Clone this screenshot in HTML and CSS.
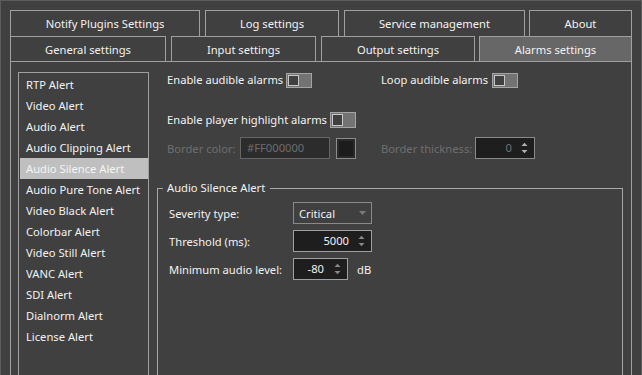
FILE: index.html
```html
<!DOCTYPE html>
<html>
<head>
<meta charset="utf-8">
<link rel="stylesheet" href="styles.css">
</head>
<body>
<div class="window">
  <div class="tabrow row1">
    <div class="tab t-notify">Notify Plugins Settings</div>
    <div class="tab t-log">Log settings</div>
    <div class="tab t-service">Service management</div>
    <div class="tab t-about">About</div>
  </div>
  <div class="tabrow row2">
    <div class="tab t-general">General settings</div>
    <div class="tab t-input">Input settings</div>
    <div class="tab t-output">Output settings</div>
    <div class="tab t-alarms selected">Alarms settings</div>
  </div>
  <div class="pane">
    <ul class="alert-list">
      <li>RTP Alert</li>
      <li>Video Alert</li>
      <li>Audio Alert</li>
      <li>Audio Clipping Alert</li>
      <li class="current">Audio Silence Alert</li>
      <li>Audio Pure Tone Alert</li>
      <li>Video Black Alert</li>
      <li>Colorbar Alert</li>
      <li>Video Still Alert</li>
      <li>VANC Alert</li>
      <li>SDI Alert</li>
      <li>Dialnorm Alert</li>
      <li>License Alert</li>
    </ul>
    <div class="main">
      <div class="grid2 row-a">
        <div class="check"><span class="check-text w-audible">Enable audible alarms</span><span class="toggle"><span class="knob"></span></span></div>
        <div class="check"><span class="check-text w-loop">Loop audible alarms</span><span class="toggle"><span class="knob"></span></span></div>
      </div>
      <div class="row-b">
        <div class="check"><span class="check-text w-highlight">Enable player highlight alarms</span><span class="toggle tall"><span class="knob"></span></span></div>
      </div>
      <div class="grid2 row-c">
        <div class="field">
          <span class="dis-label w-bcolor">Border color:</span>
          <span class="textbox">#FF000000</span>
          <span class="swatch"><span class="swatch-in"></span></span>
        </div>
        <div class="field">
          <span class="dis-label w-bthick">Border thickness:</span>
          <span class="spin disabled w-thick"><span class="spin-val">0</span><svg class="arrows" width="7" height="12" viewBox="0 0 7 12"><polygon points="0.5,4 3.5,0.8 6.5,4"/><polygon points="0.5,8 3.5,11.2 6.5,8"/></svg></span>
        </div>
      </div>
      <fieldset class="group">
        <legend>Audio Silence Alert</legend>
        <div class="grow">
          <span class="glabel">Severity type:</span>
          <span class="combo">Critical<svg class="drop" width="7" height="4" viewBox="0 0 7 4"><polygon points="0,0 7,0 3.5,4"/></svg></span>
        </div>
        <div class="grow">
          <span class="glabel">Threshold (ms):</span>
          <span class="spin w-threshold"><span class="spin-val">5000</span><svg class="arrows" width="7" height="12" viewBox="0 0 7 12"><polygon points="0.5,4 3.5,0.8 6.5,4"/><polygon points="0.5,8 3.5,11.2 6.5,8"/></svg></span>
        </div>
        <div class="grow">
          <span class="glabel">Minimum audio level:</span>
          <span class="spin w-level"><span class="spin-val">-80</span><svg class="arrows" width="7" height="12" viewBox="0 0 7 12"><polygon points="0.5,4 3.5,0.8 6.5,4"/><polygon points="0.5,8 3.5,11.2 6.5,8"/></svg></span>
          <span class="unit">dB</span>
        </div>
      </fieldset>
    </div>
  </div>
</div>
</body>
</html>
```
FILE: styles.css
```css
* { box-sizing: border-box; }
html, body { margin: 0; padding: 0; background: #404040; }
body {
  font-family: "Noto Sans", "Open Sans", sans-serif;
  font-size: 11.2px;
  color: #f2f2f2;
}
.window {
  width: 642px;
  height: 375px;
  overflow: hidden;
  border: 1px solid #5c5c5c;
  border-bottom: none;
  padding: 9px 9px 0 9px;
}
.tabrow { display: flex; }
.tab {
  border: 1px solid #a0a0a0;
  border-bottom: none;
  text-align: center;
  white-space: nowrap;
  background: #404040;
}
.row1 .tab { height: 26px; line-height: 26px; }
.row2 .tab { height: 25px; line-height: 25px; }
.t-notify { width: 190px; }
.t-log { width: 134px; margin-left: 5px; }
.t-service { width: 181px; margin-left: 5px; }
.t-about { width: 103px; margin-left: 4px; }
.t-general { width: 156px; }
.t-input { width: 145px; margin-left: 5px; }
.t-output { width: 154px; margin-left: 5px; }
.t-alarms { width: 153px; margin-left: 4px; }
.tab.selected { background: #676767; }

.pane {
  display: flex;
  align-items: flex-start;
  height: 330px;
  border: 1px solid #a0a0a0;
  padding: 10px 8px 0 7px;
}
.alert-list {
  list-style: none;
  margin: 0;
  padding: 1px 0 0 1px;
  width: 131px;
  height: 320px;
  border: 1px solid #a0a0a0;
  flex: none;
}
.alert-list li {
  height: 21px;
  line-height: 21px;
  padding-left: 6px;
  white-space: nowrap;
}
.alert-list li.current { background: #bfbfbf; color: #f4f4f4; }

.main { margin-left: 8px; flex: 1; }
.grid2 {
  display: grid;
  grid-template-columns: 214px auto;
  padding-left: 10px;
}
.row-a { height: 15px; }
.row-b { margin-top: 25px; padding-left: 10px; height: 16px; }
.row-c { margin-top: 9px; height: 22px; }
.check { display: flex; align-items: center; height: 100%; white-space: nowrap; }
.check-text { flex: none; line-height: 16px; }
.w-audible { width: 119px; }
.w-loop { width: 111px; }
.w-highlight { width: 163px; }
.toggle {
  display: flex;
  width: 26px;
  height: 15px;
  padding: 1px;
  border: 1px solid #a4a4a4;
  background: #737373;
  flex: none;
}
.toggle.tall { height: 16px; }
.knob {
  width: 11px;
  height: 100%;
  border: 1px solid #c8c8c8;
  background: #404040;
}

.field { display: flex; align-items: center; height: 22px; white-space: nowrap; }
.dis-label { color: #6e6e6e; flex: none; }
.w-bcolor { width: 73px; }
.w-bthick { width: 94px; }
.textbox {
  width: 90px;
  height: 22px;
  line-height: 20px;
  border: 1px solid #666;
  background: #2c2c2c;
  color: #6e6e6e;
  padding-left: 6px;
}
.swatch {
  margin-left: 6px;
  width: 20px;
  height: 21px;
  border: 1px solid #8c8c8c;
  padding: 2px;
  background: #2a2a2a;
}
.swatch-in { display: block; width: 100%; height: 100%; background: #1c1c1c; }

.spin {
  display: flex;
  align-items: center;
  height: 22px;
  border: 1px solid #a0a0a0;
  background: #1e1e1e;
  color: #f2f2f2;
  flex: none;
}
.spin-val { flex: 1; text-align: right; line-height: 20px; }
.spin .arrows { fill: #8a8a8a; margin: 0 6px 0 9px; flex: none; }
.spin.disabled { border-color: #8a8a8a; color: #727272; }
.spin.disabled .arrows { fill: #b0b0b0; }
.w-thick { width: 60px; }
.w-threshold { width: 79px; }
.w-level { width: 55px; }
.w-level .arrows { margin-left: 10px; }

.group {
  margin: 21px 0 0 0;
  width: 466px;
  height: 200px;
  border: 1px solid #a8a8a8;
  padding: 6px 0 0 11px;
}
.group legend {
  padding: 0 5px 0 4px;
  margin-left: -6px;
  line-height: 16px;
}
.grow {
  display: flex;
  align-items: center;
  height: 22px;
  margin-bottom: 6px;
  white-space: nowrap;
}
.glabel { width: 124px; flex: none; }
.combo {
  display: flex;
  align-items: center;
  justify-content: space-between;
  width: 79px;
  height: 22px;
  border: 1px solid #8a8a8a;
  background: #404040;
  padding: 0 5px 0 5px;
}
.combo .drop { fill: #7a7a7a; }
.unit { margin-left: 9px; }
```
